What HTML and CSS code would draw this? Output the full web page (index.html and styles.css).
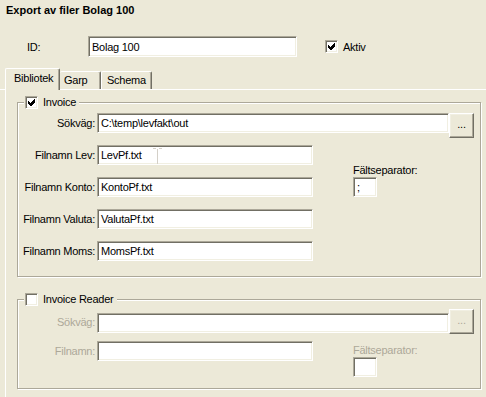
FILE: index.html
```html
<!DOCTYPE html>
<html lang="sv">
<head>
<meta charset="utf-8">
<title>Export av filer Bolag 100</title>
<link rel="stylesheet" href="styles.css">
</head>
<body>
<div class="window">
  <div class="title">Export av filer Bolag 100</div>

  <div class="idrow">
    <span class="id-label">ID:</span>
    <div class="field id-field">Bolag 100</div>
    <span class="check">
      <svg width="7" height="7" viewBox="0 0 7 7" shape-rendering="crispEdges"><path d="M0 2 L2 4 L6 0 L7 0 L7 3 L3 7 L2 7 L0 5 Z" fill="#000"/></svg>
    </span>
    <span class="aktiv">Aktiv</span>
  </div>

  <div class="tabstrip">
    <div class="tab selected">Bibliotek</div>
    <div class="tab garp">Garp</div>
    <div class="tab schema">Schema</div>
  </div>

  <div class="panel">
    <fieldset class="group group-invoice">
      <legend class="legend">
        <span class="check">
          <svg width="7" height="7" viewBox="0 0 7 7" shape-rendering="crispEdges"><path d="M0 2 L2 4 L6 0 L7 0 L7 3 L3 7 L2 7 L0 5 Z" fill="#000"/></svg>
        </span>
        <span>Invoice</span>
      </legend>
      <div class="grid grid-invoice">
        <span class="label r1">Sökväg:</span>
        <div class="field path r1">C:\temp\levfakt\out</div>
        <div class="button r1 btn-down">...</div>

        <span class="label r2">Filnamn Lev:</span>
        <div class="field name r2 has-cursor">LevPf.txt
          <svg class="ibeam" width="9" height="20" viewBox="0 0 9 20" shape-rendering="crispEdges"><path d="M0 0 H3 V1 H6 V0 H9 V1 H5 V19 H9 V20 H6 V19 H3 V20 H0 V19 H4 V1 H0 Z" fill="#D4D0C8"/></svg>
        </div>

        <div class="sep sep-invoice">
          <span class="sep-label">Fältseparator:</span>
          <div class="field small">;</div>
        </div>

        <span class="label r3">Filnamn Konto:</span>
        <div class="field name r3">KontoPf.txt</div>

        <span class="label r4">Filnamn Valuta:</span>
        <div class="field name r4">ValutaPf.txt</div>

        <span class="label r5">Filnamn Moms:</span>
        <div class="field name r5">MomsPf.txt</div>
      </div>
    </fieldset>

    <fieldset class="group group-reader">
      <legend class="legend">
        <span class="check"></span>
        <span>Invoice Reader</span>
      </legend>
      <div class="grid grid-reader disabled">
        <span class="label r1">Sökväg:</span>
        <div class="field path r1 path-reader"></div>
        <div class="button r1">...</div>

        <span class="label r3">Filnamn:</span>
        <div class="field name r3"></div>

        <div class="sep sep-reader">
          <span class="sep-label">Fältseparator:</span>
          <div class="field small"></div>
        </div>
      </div>
    </fieldset>
  </div>
</div>
</body>
</html>
```

FILE: styles.css
```css
* {
  box-sizing: border-box;
}

html, body {
  margin: 0;
  padding: 0;
  background: #ECE9D8;
}

body {
  font-family: "Liberation Sans", Arial, sans-serif;
  font-size: 11px;
  letter-spacing: -0.25px;
  color: #000;
}

.window {
  width: 486px;
  height: 397px;
  overflow: hidden;
  background: #ECE9D8;
}

.title {
  padding: 4px 0 0 6px;
  height: 17px;
  line-height: 13px;
  font-weight: bold;
  letter-spacing: 0;
}

/* ID row */
.idrow {
  margin-top: 19px;
  height: 21px;
  display: flex;
  align-items: center;
}

.id-label {
  width: 88px;
  padding-left: 27px;
}

.field {
  background: #fff;
  border: 1px solid;
  border-color: #ACA899 #fff #fff #ACA899;
  box-shadow: inset 1px 1px 0 #716F64, inset -1px -1px 0 #F1EFE2;
  height: 20px;
  padding: 1px 0 0 3px;
  line-height: 17px;
  white-space: nowrap;
  overflow: hidden;
}

.id-field {
  width: 209px;
  height: 21px;
  line-height: 18px;
}

.has-cursor {
  position: relative;
}

.ibeam {
  position: absolute;
  left: 55px;
  top: 2px;
}

.check {
  display: inline-flex;
  width: 13px;
  height: 13px;
  flex: none;
  background: #fff;
  border: 1px solid;
  border-color: #ACA899 #fff #fff #ACA899;
  box-shadow: inset 1px 1px 0 #716F64, inset -1px -1px 0 #F1EFE2;
  padding: 2px 0 0 2px;
}

.idrow .check {
  margin-left: 28px;
}

.aktiv {
  margin-left: 5px;
}

/* Tabs */
.tabstrip {
  margin-top: 11px;
  height: 22px;
  border-bottom: 1px solid #fff;
  display: flex;
  align-items: flex-end;
  padding-left: 5px;
}

.tab {
  height: 18px;
  border-top: 1px solid #fff;
  border-left: 1px solid #fff;
  border-right: 1px solid #716F64;
  box-shadow: inset -1px 0 0 #ACA899;
  border-radius: 2px 2px 0 0;
  line-height: 15px;
  padding-top: 1px;
  background: #ECE9D8;
}

.tab.selected {
  width: 55px;
  height: 22px;
  margin-bottom: -1px;
  padding-left: 8px;
  padding-top: 2px;
}

.tab.garp {
  width: 41px;
  padding-left: 4px;
  border-left: none;
}

.tab.schema {
  width: 51px;
  padding-left: 5px;
}

/* Panel */
.panel {
  margin-left: 5px;
  width: 600px;
  height: 400px;
  border-left: 1px solid #fff;
  padding: 6px 0 0 11px;
}

.group {
  margin: 0;
  width: 464px;
  min-inline-size: 0;
  border: 1px solid #ACA899;
  box-shadow: 1px 1px 0 #fff, inset 1px 1px 0 #fff;
}

.group-invoice {
  padding: 4px 0 15px 0;
}

.group-reader {
  margin-top: 16px;
  padding: 3px 0 11px 0;
}

.legend {
  margin-left: 6px;
  padding: 0 3px 0 1px;
  height: 13px;
  display: flex;
  align-items: center;
  gap: 5px;
  line-height: 13px;
  background: #ECE9D8;
}

.grid {
  display: grid;
  grid-template-columns: 79px 216px 40px 24px 72px 25px;
}

.grid-invoice {
  grid-template-rows: repeat(5, 20px);
  row-gap: 12px;
}

.grid-reader {
  grid-template-rows: 25px 7px 20px 16px;
}

.label {
  grid-column: 1;
  display: flex;
  align-items: center;
  justify-content: flex-end;
  padding-right: 2px;
  white-space: nowrap;
}

.r1 { grid-row: 1; }
.r2 { grid-row: 2; }
.r3 { grid-row: 3; }
.r4 { grid-row: 4; }
.r5 { grid-row: 5; }

.path {
  grid-column: 2 / 6;
}

.path-reader {
  align-self: end;
  margin-bottom: 1px;
}

.name {
  grid-column: 2;
}

.button {
  grid-column: 6;
  height: 25px;
  background: #ECE9D8;
  border: 1px solid;
  border-color: #fff #716F64 #716F64 #fff;
  box-shadow: inset -1px -1px 0 #ACA899, inset 1px 1px 0 #F1EFE2;
  text-align: center;
  line-height: 20px;
}

.btn-down {
  align-self: start;
  margin-bottom: -5px;
}

.sep {
  grid-column: 4 / 7;
  display: flex;
  flex-direction: column;
}

.sep-invoice {
  grid-row: 2 / 4;
  justify-content: flex-end;
}

.sep-reader {
  grid-row: 3 / 5;
  padding-top: 2px;
}

.sep-label {
  line-height: 14px;
  white-space: nowrap;
}

.field.small {
  width: 24px;
}

.disabled .label,
.disabled .sep-label,
.disabled .button {
  color: #ACA899;
}
```
